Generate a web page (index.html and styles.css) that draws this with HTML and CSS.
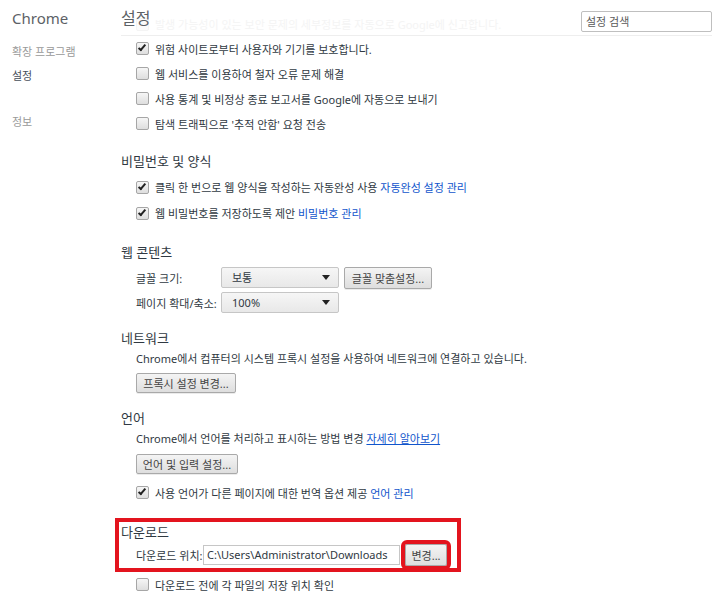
FILE: index.html
```html
<!DOCTYPE html>
<html lang="ko">

<head>
    <meta charset="UTF-8">
    <title>설정</title>
    <link rel="stylesheet" href="styles.css">
</head>

<body>
    <div class="page">
        <nav class="sidebar">
            <h1>Chrome</h1>
            <ul>
                <li>확장 프로그램</li>
                <li class="selected">설정</li>
                <li class="gap">정보</li>
            </ul>
        </nav>

        <main class="content">
            <header class="top">
                <div class="ghost"><span class="box"></span>발생 가능성이 있는 보안 문제의 세부정보를 자동으로 Google에 신고합니다.</div>
                <h1>설정</h1>
                <input type="text" class="search" placeholder="설정 검색">
            </header>

            <section class="first">
                <label class="check"><span class="box on"></span><span>위험 사이트로부터 사용자와 기기를 보호합니다.</span></label>
                <label class="check"><span class="box"></span><span>웹 서비스를 이용하여 철자 오류 문제 해결</span></label>
                <label class="check"><span class="box"></span><span>사용 통계 및 비정상 종료 보고서를 Google에 자동으로 보내기</span></label>
                <label class="check"><span class="box"></span><span>탐색 트래픽으로 '추적 안함' 요청 전송</span></label>
            </section>

            <section class="passwords">
                <h3>비밀번호 및 양식</h3>
                <label class="check tall"><span class="box on"></span><span>클릭 한 번으로 웹 양식을 작성하는 자동완성 사용 <a href="#">자동완성 설정 관리</a></span></label>
                <label class="check tall"><span class="box on"></span><span>웹 비밀번호를 저장하도록 제안 <a href="#">비밀번호 관리</a></span></label>
            </section>

            <section class="webcontent">
                <h3>웹 콘텐츠</h3>
                <div class="field">
                    <span class="field-label">글꼴 크기:</span>
                    <span class="select">보통</span>
                    <button class="btn">글꼴 맞춤설정...</button>
                </div>
                <div class="field">
                    <span class="field-label">페이지 확대/축소:</span>
                    <span class="select">100%</span>
                </div>
            </section>

            <section class="network">
                <h3>네트워크</h3>
                <p>Chrome에서 컴퓨터의 시스템 프록시 설정을 사용하여 네트워크에 연결하고 있습니다.</p>
                <button class="btn">프록시 설정 변경...</button>
            </section>

            <section class="language">
                <h3>언어</h3>
                <p>Chrome에서 언어를 처리하고 표시하는 방법 변경 <a href="#" class="underline">자세히 알아보기</a></p>
                <button class="btn">언어 및 입력 설정...</button>
                <label class="check"><span class="box on"></span><span>사용 언어가 다른 페이지에 대한 번역 옵션 제공 <a href="#">언어 관리</a></span></label>
            </section>

            <section class="downloads">
                <h3>다운로드</h3>
                <div class="field">
                    <span class="field-label short">다운로드 위치:</span>
                    <input type="text" class="path" value="C:\Users\Administrator\Downloads" readonly>
                    <button class="btn marked">변경...</button>
                </div>
            </section>

            <section class="after">
                <label class="check"><span class="box"></span><span>다운로드 전에 각 파일의 저장 위치 확인</span></label>
            </section>
        </main>
    </div>
</body>

</html>
```

FILE: styles.css
```css
*,
::before,
::after {
    margin: 0;
    padding: 0;
    box-sizing: border-box;
}

html,
body {
    font-family: 'Noto Sans', 'Noto Sans CJK KR', sans-serif;
    font-size: 11px;
    color: #303942;
    background-color: #fff;
    overflow: hidden;
}

a {
    color: #15c;
    text-decoration: none;
}

a.underline {
    text-decoration: underline;
}

.page {
    display: flex;
}

/* left navigation */
.sidebar {
    width: 121px;
    flex-shrink: 0;
    padding-left: 12px;
}

.sidebar h1 {
    height: 36px;
    line-height: 36px;
    font-size: 15px;
    font-weight: normal;
    color: #5c6166;
}

.sidebar ul {
    list-style: none;
    margin-top: 4px;
}

.sidebar li {
    height: 24px;
    line-height: 24px;
    color: #999;
}

.sidebar li.selected {
    color: #464e5a;
}

.sidebar li.gap {
    margin-top: 22px;
}

/* main column */
.content {
    flex: 1;
    padding-right: 8px;
}

.top {
    position: relative;
    height: 36px;
    display: flex;
    justify-content: space-between;
    align-items: flex-start;
    border-bottom: 1px solid #eee;
}

.top h1 {
    position: relative;
    height: 36px;
    line-height: 36px;
    font-size: 16px;
    font-weight: normal;
    color: #5c6166;
}

.top .ghost {
    position: absolute;
    top: 16px;
    left: 15px;
    display: flex;
    align-items: center;
    gap: 6px;
    color: #f4f4f4;
    white-space: nowrap;
}

.top .ghost .box {
    border-color: #f4f4f4;
    background: #fbfbfb;
}

.search {
    width: 131px;
    height: 21px;
    margin-top: 11px;
    padding: 0 4px;
    font: inherit;
    border: 1px solid #bfbfbf;
    border-radius: 2px;
    outline: none;
}

.search::placeholder {
    color: #5a5a5a;
}

section {
    padding-left: 15px;
}

section h3 {
    height: 20px;
    line-height: 20px;
    margin-left: -15px;
    font-size: 13px;
    font-weight: normal;
}

.check {
    display: flex;
    align-items: center;
    gap: 6px;
    height: 25px;
    white-space: nowrap;
}

.check.tall {
    height: 26px;
}

.box {
    display: inline-block;
    width: 13px;
    height: 13px;
    flex-shrink: 0;
    position: relative;
    border: 1px solid #a6a6a6;
    border-radius: 2px;
    background: linear-gradient(#f6f6f6, #dedede);
}

.box.on::after {
    content: '';
    position: absolute;
    left: 3px;
    top: 0;
    width: 4px;
    height: 8px;
    border-right: 2px solid #222;
    border-bottom: 2px solid #222;
    transform: rotate(40deg);
}

.btn {
    height: 22px;
    padding: 0;
    font: inherit;
    color: #444;
    white-space: nowrap;
    border: 1px solid #a9a9a9;
    border-radius: 2px;
    background: linear-gradient(#f4f4f4, #dedede);
    box-shadow: 0 1px 0 rgba(0, 0, 0, .08);
}

.field {
    display: flex;
    align-items: center;
    height: 25px;
    white-space: nowrap;
}

.field-label {
    width: 85px;
    flex-shrink: 0;
}

.select {
    position: relative;
    width: 118px;
    height: 21px;
    line-height: 19px;
    margin-right: 5px;
    padding-left: 10px;
    border: 1px solid #c6c6c6;
    border-radius: 2px;
    background: linear-gradient(#f6f6f6, #e8e8e8);
}

.select::after {
    content: '';
    position: absolute;
    right: 8px;
    top: 7px;
    border-left: 4px solid transparent;
    border-right: 4px solid transparent;
    border-top: 5px solid #222;
}

.passwords {
    margin-top: 15px;
}

.passwords h3 {
    margin-bottom: 3px;
}

.webcontent {
    margin-top: 16px;
}

.webcontent h3 {
    margin-bottom: 3px;
}

.webcontent .btn {
    width: 88px;
}

.network {
    margin-top: 13px;
}

.network p,
.language p {
    height: 20px;
    line-height: 20px;
    margin-top: 1px;
    white-space: nowrap;
}

.network .btn,
.language .btn {
    display: block;
    margin-top: 4px;
    height: 20px;
}

.network .btn {
    width: 100px;
}

.language {
    margin-top: 15px;
}

.language .btn {
    width: 102px;
    margin-top: 5px;
}

.language .check {
    margin-top: 6px;
}

/* annotated download section */
.downloads {
    margin-top: 13px;
    margin-left: -6px;
    padding: 1px 8px 0 17px;
    width: 346px;
    height: 54px;
    border: 4px solid #e3141e;
}

.downloads h3 {
    height: 18px;
    line-height: 18px;
}

.downloads .field {
    height: 27px;
}

.field-label.short {
    width: 67px;
}

.path {
    width: 197px;
    height: 20px;
    padding: 0 3px;
    font: inherit;
    color: #303942;
    border: 1px solid #c6c6c6;
    outline: none;
}

.btn.marked {
    width: 42px;
    margin-left: 5px;
    outline: 4px solid #e3141e;
}
```
